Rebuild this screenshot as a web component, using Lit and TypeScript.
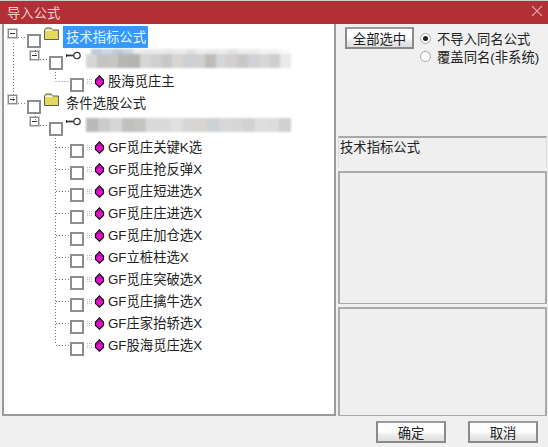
import { LitElement, html, css, svg } from "lit";
import { customElement } from "lit/decorators.js";

type Row = { level: number; kind: "folder" | "key" | "gem"; label?: string; selected?: boolean; blur?: string[]; strip?: string[] };

const blurA = ["#d8d6d5", "#c4c4c6", "#c6c6c4", "#b6b6b4", "#b4b4b2", "#d6d6d6", "#cfcfcf", "#c8c8c8", "#d8d6d3", "#ccd0d4", "#d0d0d0", "#bdbcb9", "#d2d6d8", "#d4cfd0", "#c9c7c5", "#d0d2d8", "#d8d6d6", "#d0cfcf", "#eaeaea"];
const stripA = ["#b9cadb", "#c9d8e6", "#bccbd9", "#c9d4de", "#ececec", "#e9e9e9", "#ececec", "#e8e8e8", "#ececec", "#e2e2e2", "#ededed", "#e9e9e9", "#ececec", "#e4e4e4", "#eeeeee", "#ececec", "#f2f2f2", "#f2f2f2", "#fafafa"];
const blurB = ["#b9b9b9", "#cbcbcb", "#d6d6d6", "#c0c1bf", "#c4c4c2", "#d9d9d9", "#dadada", "#e0e0e0", "#d6d6d6", "#d8d5d0", "#ccd2d6", "#d8d8d8", "#d6d6d6", "#d2d2d2", "#dedede", "#dcdcdc", "#d2d0d0"];

const rows: Row[] = [
  { level: 0, kind: "folder", label: "技术指标公式", selected: true },
  { level: 1, kind: "key", blur: blurA, strip: stripA },
  { level: 2, kind: "gem", label: "股海觅庄主" },
  { level: 0, kind: "folder", label: "条件选股公式" },
  { level: 1, kind: "key", blur: blurB },
  { level: 2, kind: "gem", label: "GF觅庄关键K选" },
  { level: 2, kind: "gem", label: "GF觅庄抢反弹X" },
  { level: 2, kind: "gem", label: "GF觅庄短进选X" },
  { level: 2, kind: "gem", label: "GF觅庄庄进选X" },
  { level: 2, kind: "gem", label: "GF觅庄加仓选X" },
  { level: 2, kind: "gem", label: "GF立桩柱选X" },
  { level: 2, kind: "gem", label: "GF觅庄突破选X" },
  { level: 2, kind: "gem", label: "GF觅庄擒牛选X" },
  { level: 2, kind: "gem", label: "GF庄家抬轿选X" },
  { level: 2, kind: "gem", label: "GF股海觅庄选X" },
];

const folder = html`<svg class="ic" width="17" height="14" viewBox="0 0 17 14">
  <path d="M1.5 12.5V3L3 1H8L9.5 3H15.5V12.5Z" fill="#e4da5e" stroke="#5f5f5f" stroke-width="1"/>
  <path d="M2.5 3.3H9.5" stroke="#f6f6f0" stroke-width="1.4"/>
</svg>`;

const key = html`<svg class="ic" width="17" height="10" viewBox="0 0 17 10">
  <circle cx="12" cy="4.5" r="3.2" fill="#fff" stroke="#333" stroke-width="1.2"/>
  <path d="M1 4.5H8.5" stroke="#333" stroke-width="1.7"/>
  <path d="M1.5 3V6" stroke="#333" stroke-width="1"/>
</svg>`;

const gem = html`<svg class="ic" width="18" height="13" viewBox="0 0 18 13">
  <path d="M0 4.5H6M0 6.5H6M0 8.5H6" stroke="#a8a8a8" stroke-width="0.8" stroke-dasharray="1 1"/>
  <path d="M12.5 0.8L16.5 5V8.5L12.5 12.2L8.5 8.5V5Z" fill="#e60fd2" stroke="#111" stroke-width="1.2"/>
  <path d="M12.5 1.5V4.5M9 5.5L12.5 4.5L16 5.5" stroke="#8a0a80" stroke-width="0.6" fill="none"/>
</svg>`;

@customElement("app-root")
export class AppRoot extends LitElement {
  static styles = css`
    :host {
      display: block;
      width: 548px;
      height: 447px;
      font-family: "Liberation Sans", "Noto Sans CJK SC", sans-serif;
      font-size: 13.33px;
      color: #222;
      background: #f0f0f0;
    }
    .win { height: 447px; display: flex; flex-direction: column; box-sizing: border-box; }
    .title {
      height: 24px; flex: none; background: #b03035; border-top: 1px solid #ccc; box-sizing: border-box;
      color: #f0cccc; display: flex; align-items: center; justify-content: space-between; padding: 0 4px 0 7px;
    }
    .title svg { margin-bottom: 3px; }
    .body { height: 392px; flex: none; display: flex; padding-left: 2px; }
    .tree {
      width: 334px; flex: none; box-sizing: border-box; background: #fff;
      border: solid #9a9a9a; border-width: 0 2px 2px 2px; position: relative; padding-top: 2px;
    }
    .lines { position: absolute; left: -4px; top: -24px; pointer-events: none; }
    .row { height: 22px; display: flex; align-items: center; position: relative; }
    .l0 { padding-left: 4px; } .l1 { padding-left: 26px; } .l2 { padding-left: 66px; }
    .exp {
      width: 9px; height: 9px; box-sizing: border-box; border: 1px solid #8a8a8a; background: #fff;
      display: flex; align-items: center; justify-content: center; margin-right: 10px; flex: none; margin-bottom: 8px; outline: 1px solid #ccc;
    }
    .exp::after { content: ""; width: 5px; height: 1px; background: #333; }
    .chk {
      width: 14px; height: 14px; box-sizing: border-box; border: 2px solid #8d8d8d; background: #fff; flex: none; margin-right: 2px; margin-top: 7px;
    }
    .ic { flex: none; display: block; }
    .l0 .ic { margin-top: -7px; margin-right: 3px; }
    .l1 .ic { margin-top: -7px; margin-right: 4px; }
    .l2 .ic { margin-left: 1px; margin-top: 1px; margin-right: 3px; }
    .lab { white-space: nowrap; line-height: 20px; margin-top: 1px; }
    .l0 .lab { margin-left: 3px; }
    .l0 .lab.sel { background: #3399ff; color: #e8f4ff; height: 22px; line-height: 24px; padding: 0 2px 0 3px; margin: 0; }
    .blur { width: 205px; filter: blur(1px); display: flex; flex-direction: column; }
    .b1 { margin-top: -2px; }
    .b2 { margin-top: -1px; }
    .cells { display: flex; height: 14px; }
    .stripe { display: flex; height: 5px; padding-left: 5px; }
    .cells span, .stripe span { flex: 1; }
    .side { flex: 1; display: flex; flex-direction: column; padding-left: 2px; padding-right: 1px; }
    .top { height: 112px; display: flex; flex: none; padding: 3px 0 0 7px; box-sizing: border-box; gap: 6px; }
    .btn {
      box-sizing: border-box; width: 69px; height: 22px; border: 2px solid #8a8a8a; border-top-color: #9a9a9a;
      background: linear-gradient(#fefefe 0 45%, #e9e9e9 70%, #dfdfdf); font: inherit; color: #222; padding: 0;
      display: flex; align-items: center; justify-content: center; flex: none;
    }
    .radios { display: flex; flex-direction: column; padding-top: 3px; }
    .radio { height: 17.5px; display: flex; align-items: center; gap: 6px; white-space: nowrap; }
    .dot { width: 11px; height: 11px; border-radius: 50%; background: #fff; border: 1px solid #a5a5a5; box-sizing: border-box; display: flex; align-items: center; justify-content: center; flex: none; }
    .dot.on::after { content: ""; width: 5px; height: 5px; border-radius: 50%; background: #222; }
    .panel { box-sizing: border-box; border: 1px solid #b4b4b4; border-top: 2px solid #a8a8a8; background: #efefef; flex: none; }
    .p1 { height: 31px; line-height: 20px; padding-left: 1px; border-left: 1px solid #ddd; border-right: 1px solid #ddd; border-bottom: 0; margin-bottom: 4px; }
    .p2 { height: 133px; margin-bottom: 3px; border-left-width: 2px; border-right-width: 2px; border-color: #aaa; }
    .p3 { height: 109px; border-left-width: 2px; border-right-width: 2px; border-color: #aaa; }
    .foot { flex: 1; display: flex; padding: 5px 0 0 376px; gap: 22px; }
    .foot .btn { width: 70px; }
  `;

  private renderLines() {
    const seg = (x1: number, y1: number, x2: number, y2: number) =>
      svg`<line x1=${x1} y1=${y1} x2=${x2} y2=${y2} stroke="#777" stroke-width="1" stroke-dasharray="1 2"/>`;
    return html`<svg class="lines" width="340" height="392">
      ${seg(13.5, 43, 13.5, 103)}
      ${seg(18, 37.5, 27, 37.5)}
      ${seg(18, 103.5, 27, 103.5)}
      ${seg(35.5, 47, 35.5, 55)}
      ${seg(40, 59.5, 49, 59.5)}
      ${seg(35.5, 113, 35.5, 121)}
      ${seg(40, 125.5, 49, 125.5)}
      ${seg(55.5, 69, 55.5, 81)}
      ${seg(55.5, 81.5, 70, 81.5)}
      ${seg(55.5, 135, 55.5, 345)}
      ${[0, 1, 2, 3, 4, 5, 6, 7, 8, 9].map((i) => seg(56, 147.5 + i * 22, 70, 147.5 + i * 22))}
    </svg>`;
  }

  render() {
    return html`<div class="win">
      <div class="title">
        <span>导入公式</span>
        <svg width="14" height="14" viewBox="0 0 14 14"><path d="M2 2L12 12M12 2L2 12" stroke="#dfa0a0" stroke-width="1.1"/></svg>
      </div>
      <div class="body">
        <div class="tree">
          ${rows.map(
            (r) => html`<div class="row l${r.level}">
              ${r.level < 2 ? html`<span class="exp"></span>` : ""}
              <span class="chk"></span>
              ${r.kind === "folder" ? folder : r.kind === "key" ? key : gem}
              ${r.label
                ? html`<span class="lab ${r.selected ? "sel" : ""}">${r.label}</span>`
                : html`<span class="blur ${r.strip ? "b1" : "b2"}">
                    ${r.strip ? html`<span class="stripe">${r.strip.map((c) => html`<span style="background:${c}"></span>`)}</span>` : ""}
                    <span class="cells">${r.blur!.map((c) => html`<span style="background:${c}"></span>`)}</span>
                  </span>`}
            </div>`
          )}
          ${this.renderLines()}
        </div>
        <div class="side">
          <div class="top">
            <div class="btn">全部选中</div>
            <div class="radios">
              <div class="radio"><span class="dot on"></span>不导入同名公式</div>
              <div class="radio"><span class="dot"></span>覆盖同名(非系统)</div>
            </div>
          </div>
          <div class="panel p1">技术指标公式</div>
          <div class="panel p2"></div>
          <div class="panel p3"></div>
        </div>
      </div>
      <div class="foot">
        <div class="btn">确定</div>
        <div class="btn">取消</div>
      </div>
    </div>`;
  }
}
